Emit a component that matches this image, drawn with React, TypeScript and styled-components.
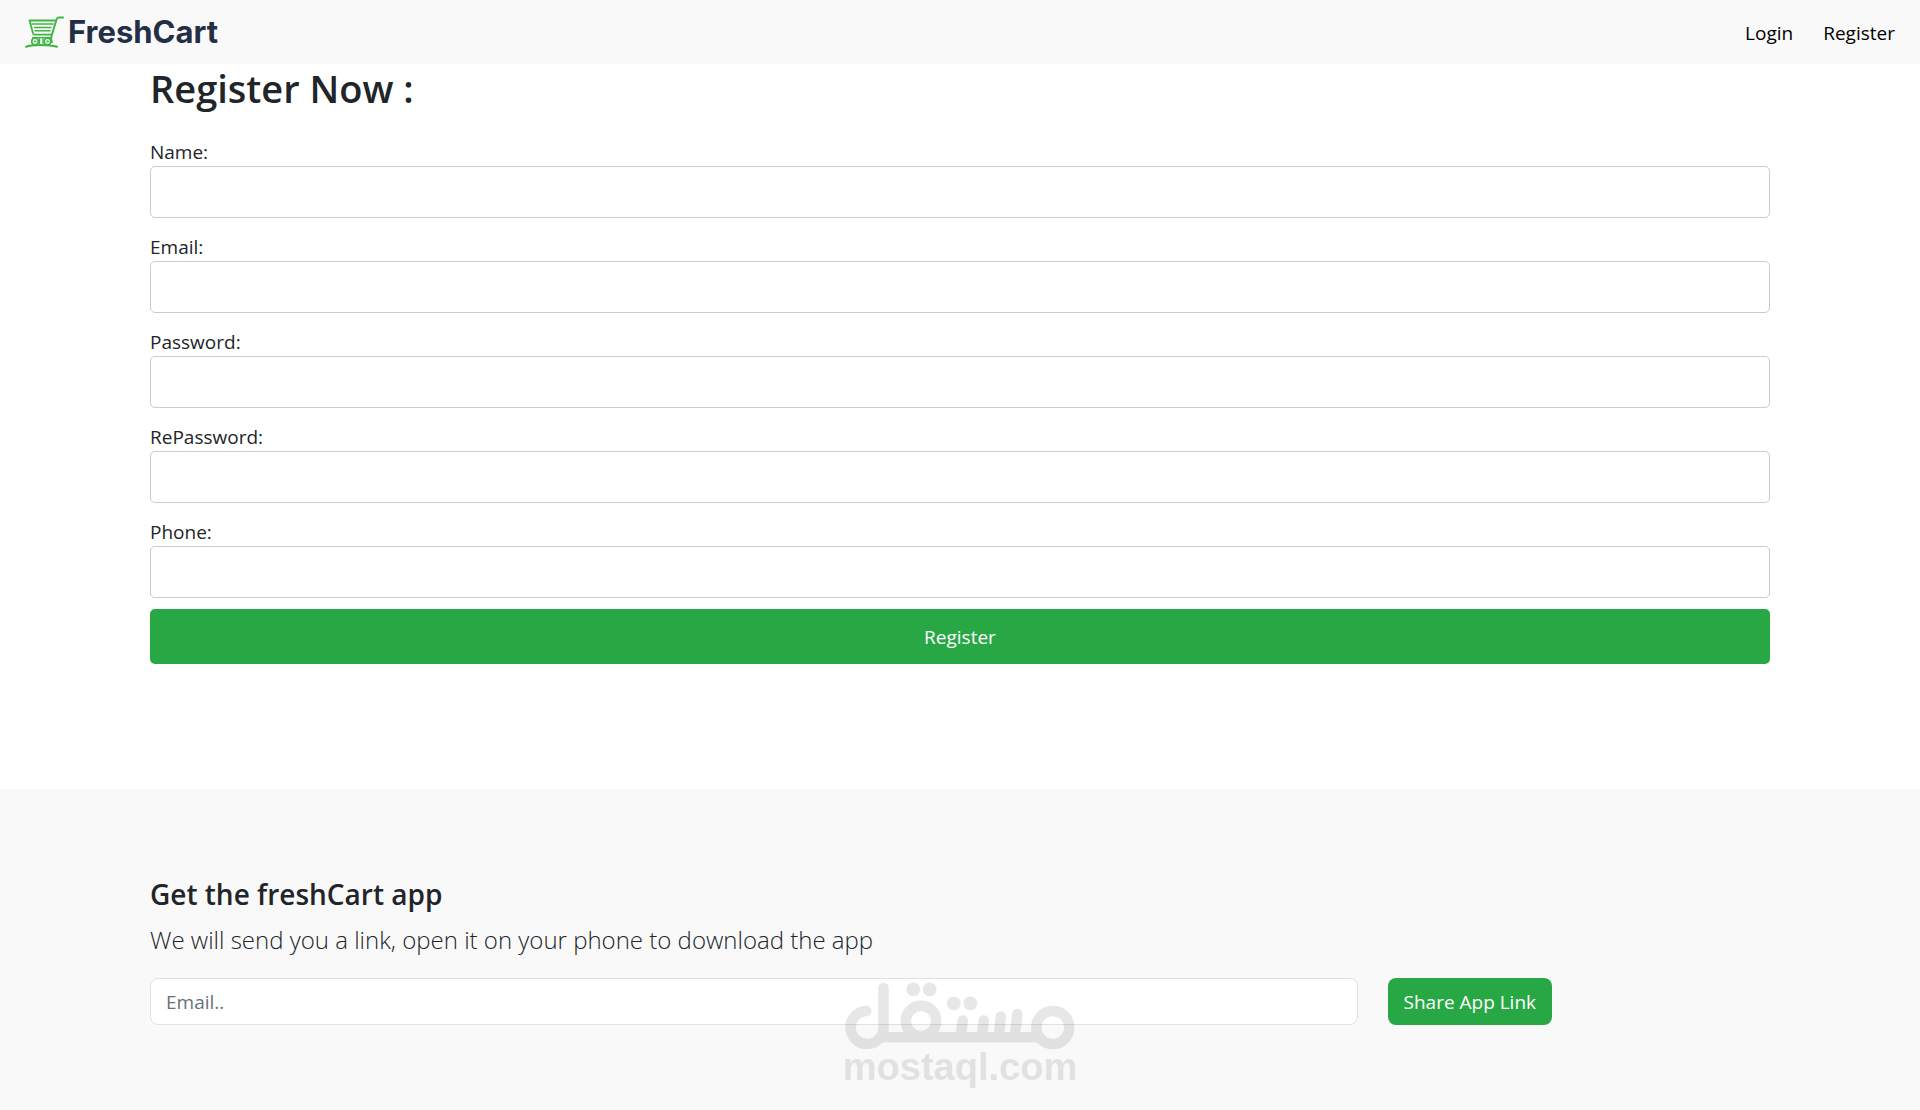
import React from "react";
import styled, { createGlobalStyle } from "styled-components";

const GlobalStyle = createGlobalStyle`
  *, *::before, *::after { box-sizing: border-box; }
  body {
    margin: 0;
    background: #fff;
    color: #212529;
    font-family: "Segoe UI", "Open Sans", "Noto Sans", sans-serif;
    font-size: 19px;
    line-height: 28px;
  }
  #root { min-height: 100vh; display: flex; flex-direction: column; }
`;

const GREEN = "#28a745";

const Container = styled.div`
  width: 100%;
  max-width: 1650px;
  margin: 0 auto;
  padding: 0 15px;
`;

const Navbar = styled.header`
  display: flex;
  align-items: center;
  justify-content: space-between;
  height: 64px;
  padding: 0 25px;
  background: #f9f9f9;
`;

const Brand = styled.a`
  display: flex;
  align-items: center;
  gap: 4px;
  color: #232f45;
  font-family: Inter, "Liberation Sans", sans-serif;
  font-size: 31px;
  font-weight: 700;
  line-height: 36px;
  text-decoration: none;
`;

const CartSvg = styled.svg`
  width: 39px;
  height: 32px;
`;

const NavLinks = styled.nav`
  display: flex;
  gap: 30px;
  padding-top: 2px;
`;

const NavLink = styled.a`
  color: #000;
  text-decoration: none;
`;

const Title = styled.h1`
  margin: 0;
  padding-bottom: 26px;
  font-size: 38px;
  font-weight: 600;
  line-height: 48px;
`;

const Form = styled.form`
  display: flex;
  flex-direction: column;
  gap: 15px;
`;

const Field = styled.div`
  display: flex;
  flex-direction: column;
`;

const TextInput = styled.input`
  height: 52px;
  padding: 0 15px;
  border: 1px solid #ccc;
  border-radius: 5px;
  background: #fff;
  color: inherit;
  font: inherit;
`;

const SubmitButton = styled.button`
  height: 55px;
  margin: -4px 0 125px;
  border: 0;
  border-radius: 5px;
  background: ${GREEN};
  color: #fff;
  font: inherit;
  cursor: pointer;
`;

const Footer = styled.footer`
  position: relative;
  flex: 1;
  padding: 86px 0;
  background: #f9f9f9;
`;

const FooterTitle = styled.h2`
  margin: 0 0 8px;
  font-size: 28px;
  font-weight: 600;
  line-height: 38px;
`;

const FooterText = styled.p`
  margin: 0 0 20px;
  font-size: 24px;
  font-weight: 300;
  line-height: 37px;
`;

const ShareForm = styled.form`
  display: grid;
  grid-template-columns: repeat(12, 1fr);
  gap: 30px;
`;

const ShareInput = styled(TextInput)`
  grid-column: span 9;
  height: 47px;
  border-color: #dee2e6;
  border-radius: 8px;
  &::placeholder { color: #6b7075; opacity: 1; }
`;

const ShareButton = styled.button`
  grid-column: span 3;
  justify-self: start;
  height: 47px;
  padding: 0 16px;
  border: 0;
  border-radius: 8px;
  background: ${GREEN};
  color: #fff;
  font: inherit;
  white-space: nowrap;
  cursor: pointer;
`;

const Watermark = styled.div`
  position: absolute;
  top: 193px;
  left: 50%;
  display: flex;
  flex-direction: column;
  align-items: center;
  transform: translateX(-50%);
  color: #000;
  opacity: 0.09;
  pointer-events: none;
`;

const WatermarkText = styled.span`
  font-family: "Liberation Sans", Arial, sans-serif;
  font-size: 38px;
  font-weight: 700;
  line-height: 34px;
`;

function CartIcon() {
  return (
    <CartSvg viewBox="0 0 39 32" fill="none" stroke="#3fb543" strokeLinecap="round" strokeLinejoin="round" aria-hidden="true">
      <path d="M38 1.5h-4.2c-1.3 0-1.9.8-2.3 2L26.5 20c-.6 1.800-.7 4 .3 6" strokeWidth="2" />
      <path d="M30 4.500H4.500L8 17.300c.3 1 .8 1.400 1.800 1.400H26" strokeWidth="1.800" />
      <path d="M7 8h21M9.500 11.500H26M10 14.800h15" strokeWidth="1.500" />
      <path d="M7.500 21.700H25.500" strokeWidth="1.300" />
      <circle cx="10" cy="25.500" r="3.300" strokeWidth="1.700" />
      <circle cx="22.500" cy="25.500" r="3.300" strokeWidth="1.700" />
      <circle cx="10" cy="25.500" r=".8" strokeWidth="1" />
      <circle cx="22.500" cy="25.500" r=".8" strokeWidth="1" />
      <path d="M14.500 22v6M18 22v6" strokeWidth="1.300" />
      <path d="M1 30.800c5-2.400 23-2.400 31 0" strokeWidth="2" />
    </CartSvg>
  );
}

function MostaqlMark() {
  return (
    <svg width="230" height="68" viewBox="0 0 230 68" fill="none" stroke="currentColor" strokeWidth="10.5" strokeLinecap="round" aria-hidden="true">
      <path d="M21.500 29A16.500 16.500 0 1 0 38.700 45.500V6" />
      <path d="M36 55.300H196" strokeLinecap="butt" />
      <circle cx="76.200" cy="39" r="15.200" />
      <circle cx="208" cy="45.500" r="16.500" />
      <path d="M118 38.500L116 54M139 38.500L137 54M156 34.500L154 54M172.500 32L170 54" />
      <g fill="currentColor" stroke="none">
        <circle cx="68.500" cy="7.300" r="6.900" />
        <circle cx="84.900" cy="7.300" r="6.900" />
        <circle cx="109" cy="21.300" r="6.900" />
        <circle cx="125.500" cy="21.300" r="6.900" />
      </g>
    </svg>
  );
}

const fields = [
  { id: "name", label: "Name:", type: "text" },
  { id: "email", label: "Email:", type: "email" },
  { id: "password", label: "Password:", type: "password" },
  { id: "rePassword", label: "RePassword:", type: "password" },
  { id: "phone", label: "Phone:", type: "tel" },
];

export default function App() {
  return (
    <>
      <GlobalStyle />
      <Navbar>
        <Brand href="#">
          <CartIcon />
          <span>FreshCart</span>
        </Brand>
        <NavLinks>
          <NavLink href="#login">Login</NavLink>
          <NavLink href="#register">Register</NavLink>
        </NavLinks>
      </Navbar>
      <Container as="main">
        <Title>Register Now :</Title>
        <Form onSubmit={(e) => e.preventDefault()}>
          {fields.map((field) => (
            <Field key={field.id}>
              <label htmlFor={field.id}>{field.label}</label>
              <TextInput id={field.id} name={field.id} type={field.type} />
            </Field>
          ))}
          <SubmitButton type="submit">Register</SubmitButton>
        </Form>
      </Container>
      <Footer>
        <Container>
          <FooterTitle>Get the freshCart app</FooterTitle>
          <FooterText>We will send you a link, open it on your phone to download the app</FooterText>
          <ShareForm onSubmit={(e) => e.preventDefault()}>
            <ShareInput type="email" placeholder="Email.." aria-label="Email" />
            <ShareButton type="submit">Share App Link</ShareButton>
          </ShareForm>
        </Container>
        <Watermark>
          <MostaqlMark />
          <WatermarkText>mostaql.com</WatermarkText>
        </Watermark>
      </Footer>
    </>
  );
}
